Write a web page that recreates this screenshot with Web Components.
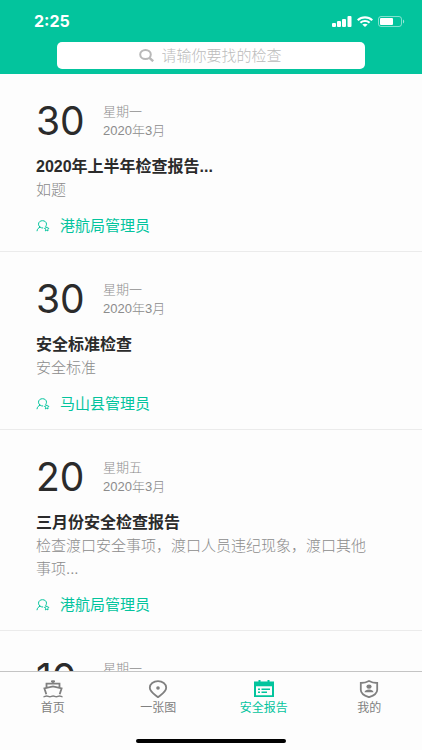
<!DOCTYPE html>
<html lang="zh-CN">
<head>
<meta charset="utf-8">
<meta name="viewport" content="width=device-width, initial-scale=1">
<title>安全报告</title>
<style>
  :root { --brand: #03c49d; --muted: #8c8c8c; --ink: #2b2b2b; }
  body { margin: 0; background: #fdfdfd; color: var(--ink);
    font-family: "Liberation Sans", "Noto Sans CJK SC", sans-serif; }
</style>
</head>
<body>
<report-app>
  <app-header slot="header"></app-header>
  <report-card day="30" weekday="星期一" month="2020年3月" author="港航局管理员">
    <span slot="title">2020年上半年检查报告...</span>如题
  </report-card>
  <report-card day="30" weekday="星期一" month="2020年3月" author="马山县管理员">
    <span slot="title">安全标准检查</span>安全标准
  </report-card>
  <report-card day="20" weekday="星期五" month="2020年3月" author="港航局管理员">
    <span slot="title">三月份安全检查报告</span>检查渡口安全事项，渡口人员违纪现象，渡口其他事项...
  </report-card>
  <report-card day="10" weekday="星期一"></report-card>
  <tab-bar slot="footer">
    <tab-item icon="ship" href="#home">首页</tab-item>
    <tab-item icon="pin" href="#map">一张图</tab-item>
    <tab-item icon="calendar" href="#reports" active>安全报告</tab-item>
    <tab-item icon="shield" href="#me">我的</tab-item>
  </tab-bar>
</report-app>

<script>
const define = (name, render) => customElements.define(name, class extends HTMLElement {
  constructor() {
    super();
    this.attachShadow({ mode: "open" });
  }
  connectedCallback() {
    this.shadowRoot.innerHTML = render(this);
  }
});

define("report-app", () => `
  <style>
    :host { display: flex; flex-direction: column; height: 100vh; }
    main { flex: 1; min-height: 0; overflow-y: auto; scrollbar-width: none; }
  </style>
  <slot name="header"></slot>
  <main><slot></slot></main>
  <slot name="footer"></slot>`);

define("status-bar", () => `
  <style>
    :host { display: flex; justify-content: space-between; align-items: center;
      height: 42px; padding: 0 17px 0 34px; color: #fff; }
    time { font: 700 16px/20px Inter, sans-serif; }
    .icons { display: flex; align-items: center; gap: 5px; }
    svg { display: block; fill: #fff; }
  </style>
  <time>2:25</time>
  <div class="icons">
    <svg width="20" height="11" viewBox="0 0 20 11" role="img" aria-label="信号">
      <rect x="0" y="7" width="4" height="4" rx="1"/><rect x="5" y="5" width="4" height="6" rx="1"/>
      <rect x="10" y="3" width="4" height="8" rx="1"/><rect x="15.500" y="0" width="4" height="11" rx="1"/>
    </svg>
    <svg width="16" height="11" viewBox="0 0 16 11" role="img" aria-label="无线网络">
      <path d="M0 3.500C4.400-.9 11.600-.9 16 3.500L14.500 5C10.900 1.700 5.100 1.700 1.500 5zM2.700 6.100c3-2.700 7.600-2.700 10.600 0l-1.500 1.400c-2.200-1.900-5.400-1.900-7.600 0zM5.300 8.600c1.600-1.300 3.800-1.300 5.400 0L8 11z"/>
    </svg>
    <svg width="27" height="11" viewBox="0 0 27 11" role="img" aria-label="电量">
      <rect x=".5" y=".5" width="23" height="10" rx="2.500" fill="none" stroke="#fff" stroke-opacity=".5"/>
      <rect x="2" y="2" width="13" height="7" rx="1"/><path d="M25 3.500c1.600.6 1.600 3.400 0 4z" opacity=".6"/>
    </svg>
  </div>`);

define("search-box", () => `
  <style>
    :host { display: block; margin: 0 57px; }
    label { display: flex; justify-content: center; align-items: center; gap: 8px;
      height: 27px; border-radius: 5px; background: #fff; }
    svg { flex: none; fill: none; stroke: #b8b8b8; stroke-width: 2; }
    input { width: 122px; padding: 0; border: 0; outline: 0; background: none;
      font: inherit; font-size: 15px; line-height: 23px; color: var(--ink); }
    input::placeholder { color: #bbb; opacity: 1; font-weight: 300; }
  </style>
  <label>
    <svg width="15" height="13" viewBox="0 0 15 13" aria-hidden="true">
      <ellipse cx="6.500" cy="5.500" rx="5.300" ry="4.500"/><path d="M10.400 8.900l3.800 3.300" stroke-width="2.400"/>
    </svg>
    <input type="text" aria-label="搜索检查" placeholder="请输你要找的检查">
  </label>`);

define("app-header", () => `
  <style>:host { display: block; flex: none; padding-bottom: 5px; background: var(--brand); }</style>
  <status-bar></status-bar>
  <search-box></search-box>`);

define("report-card", el => `
  <style>
    :host { display: block; padding: 28px 44px 14px 36px; border-bottom: 1px solid #ebebeb; }
    header { display: flex; align-items: center; height: 38px; margin-bottom: 15px; }
    .day { min-width: 67px; font: 400 39px/38px Inter, sans-serif; }
    .when { font-size: 13px; line-height: 19px; color: var(--muted); font-weight: 300; }
    h2 { margin: 0; font-size: 16px; line-height: 23px; font-weight: 700; }
    p { margin: 0 0 14px; font-size: 15px; line-height: 23px; color: var(--muted); font-weight: 300; }
    footer { display: flex; align-items: center; gap: 10px; height: 22px;
      font-size: 15px; line-height: 22px; color: var(--brand); }
    svg { flex: none; fill: none; stroke: currentColor; }
  </style>
  <article>
    <header>
      <span class="day">${el.getAttribute("day")}</span>
      <div class="when"><div>${el.getAttribute("weekday")}</div><div>${el.getAttribute("month") || "&nbsp;"}</div></div>
    </header>
    <h2><slot name="title"></slot></h2>
    <p><slot></slot></p>
    ${el.hasAttribute("author") ? `<footer>
      <svg width="14" height="12" viewBox="0 0 14 12" aria-hidden="true">
        <path d="M1 11.200C1.200 9 2.300 7.900 4.200 7.200M7.200 8C5 8.200 2.500 6.600 2.500 4.200 2.500 2 4.300.7 6.500.7s4 1.300 4 3.500c0 1-.5 1.900-1.200 2.500"/>
        <path d="M10.700 6.800l.7 1.200 1.500.3-1 1.100.1 1.500-1.300-.6-1.300.6.100-1.500-1-1.100 1.500-.3z"/>
      </svg>
      <span>${el.getAttribute("author")}</span>
    </footer>` : ""}
  </article>`);

const icons = {
  ship: `<path d="M3.500 7.200V3.700h13v3.500M10 .2v3M8 1.300h4M3.300 14.200L1.400 8.300 10 6.300l8.600 2-1.900 5.900" /><path d="M.5 16.800c1.600 0 1.600-.8 3.200-.8s1.600.8 3.200.8 1.600-.8 3.200-.8 1.600.8 3.200.8 1.600-.8 3.200-.8 1.600.8 3 .8" stroke-width="1.500"/>`,
  pin: `<path d="M10 17.200C6.500 14.300 1.800 11.800 1.800 7.800 1.800 4 5.500 1.200 10 1.200s8.200 2.800 8.200 6.600c0 4-4.700 6.500-8.200 9.400z"/><circle cx="10" cy="8" r="1.800" fill="currentColor" stroke="none"/>`,
  calendar: `<path fill="currentColor" stroke="none" fill-rule="evenodd" d="M0 1.500h4.500V0h2v1.500h7V0h2v1.500H20V17H0zM2 6.300v9h16v-9z"/><path stroke-width="1.500" d="M4 9.200h2M7.500 9.200H16M4 12.300h2M7.500 12.300H13"/>`,
  shield: `<path d="M10 1c2.500 1.400 5.300 2 8.200 2v7c0 3.500-3.600 5.700-8.200 7.200C5.400 15.700 1.800 13.500 1.800 10V3C4.700 3 7.500 2.400 10 1z"/><ellipse cx="10" cy="6.600" rx="2.600" ry="2.200" fill="currentColor" stroke="none"/><path fill="currentColor" stroke="none" d="M5.500 12.300c.3-2 2.300-2.800 4.500-2.800s4.200.8 4.500 2.800z"/>`
};

define("tab-item", el => `
  <style>
    :host { flex: 1; display: block; }
    a { display: flex; flex-direction: column; align-items: center; gap: 1px; padding-top: 8px;
      color: ${el.hasAttribute("active") ? "var(--brand)" : "#808080"}; text-decoration: none;
      font-size: 12px; line-height: 18px; }
    svg { display: block; fill: none; stroke: currentColor; stroke-width: 1.800; }
  </style>
  <a href="${el.getAttribute("href")}" ${el.hasAttribute("active") ? 'aria-current="page"' : ""}>
    <svg width="20" height="18" viewBox="0 0 20 18" aria-hidden="true">${icons[el.getAttribute("icon")]}</svg>
    <slot></slot>
  </a>`);

define("tab-bar", () => `
  <style>
    :host { display: block; flex: none; background: #fdfdfd; border-top: 1px solid #c4c4c4; }
    nav { display: flex; height: 67px; }
    .indicator { width: 150px; height: 4px; margin: 0 auto 7px; border-radius: 2px; background: #000; }
  </style>
  <nav><slot></slot></nav>
  <div class="indicator"></div>`);
</script>
</body>
</html>
